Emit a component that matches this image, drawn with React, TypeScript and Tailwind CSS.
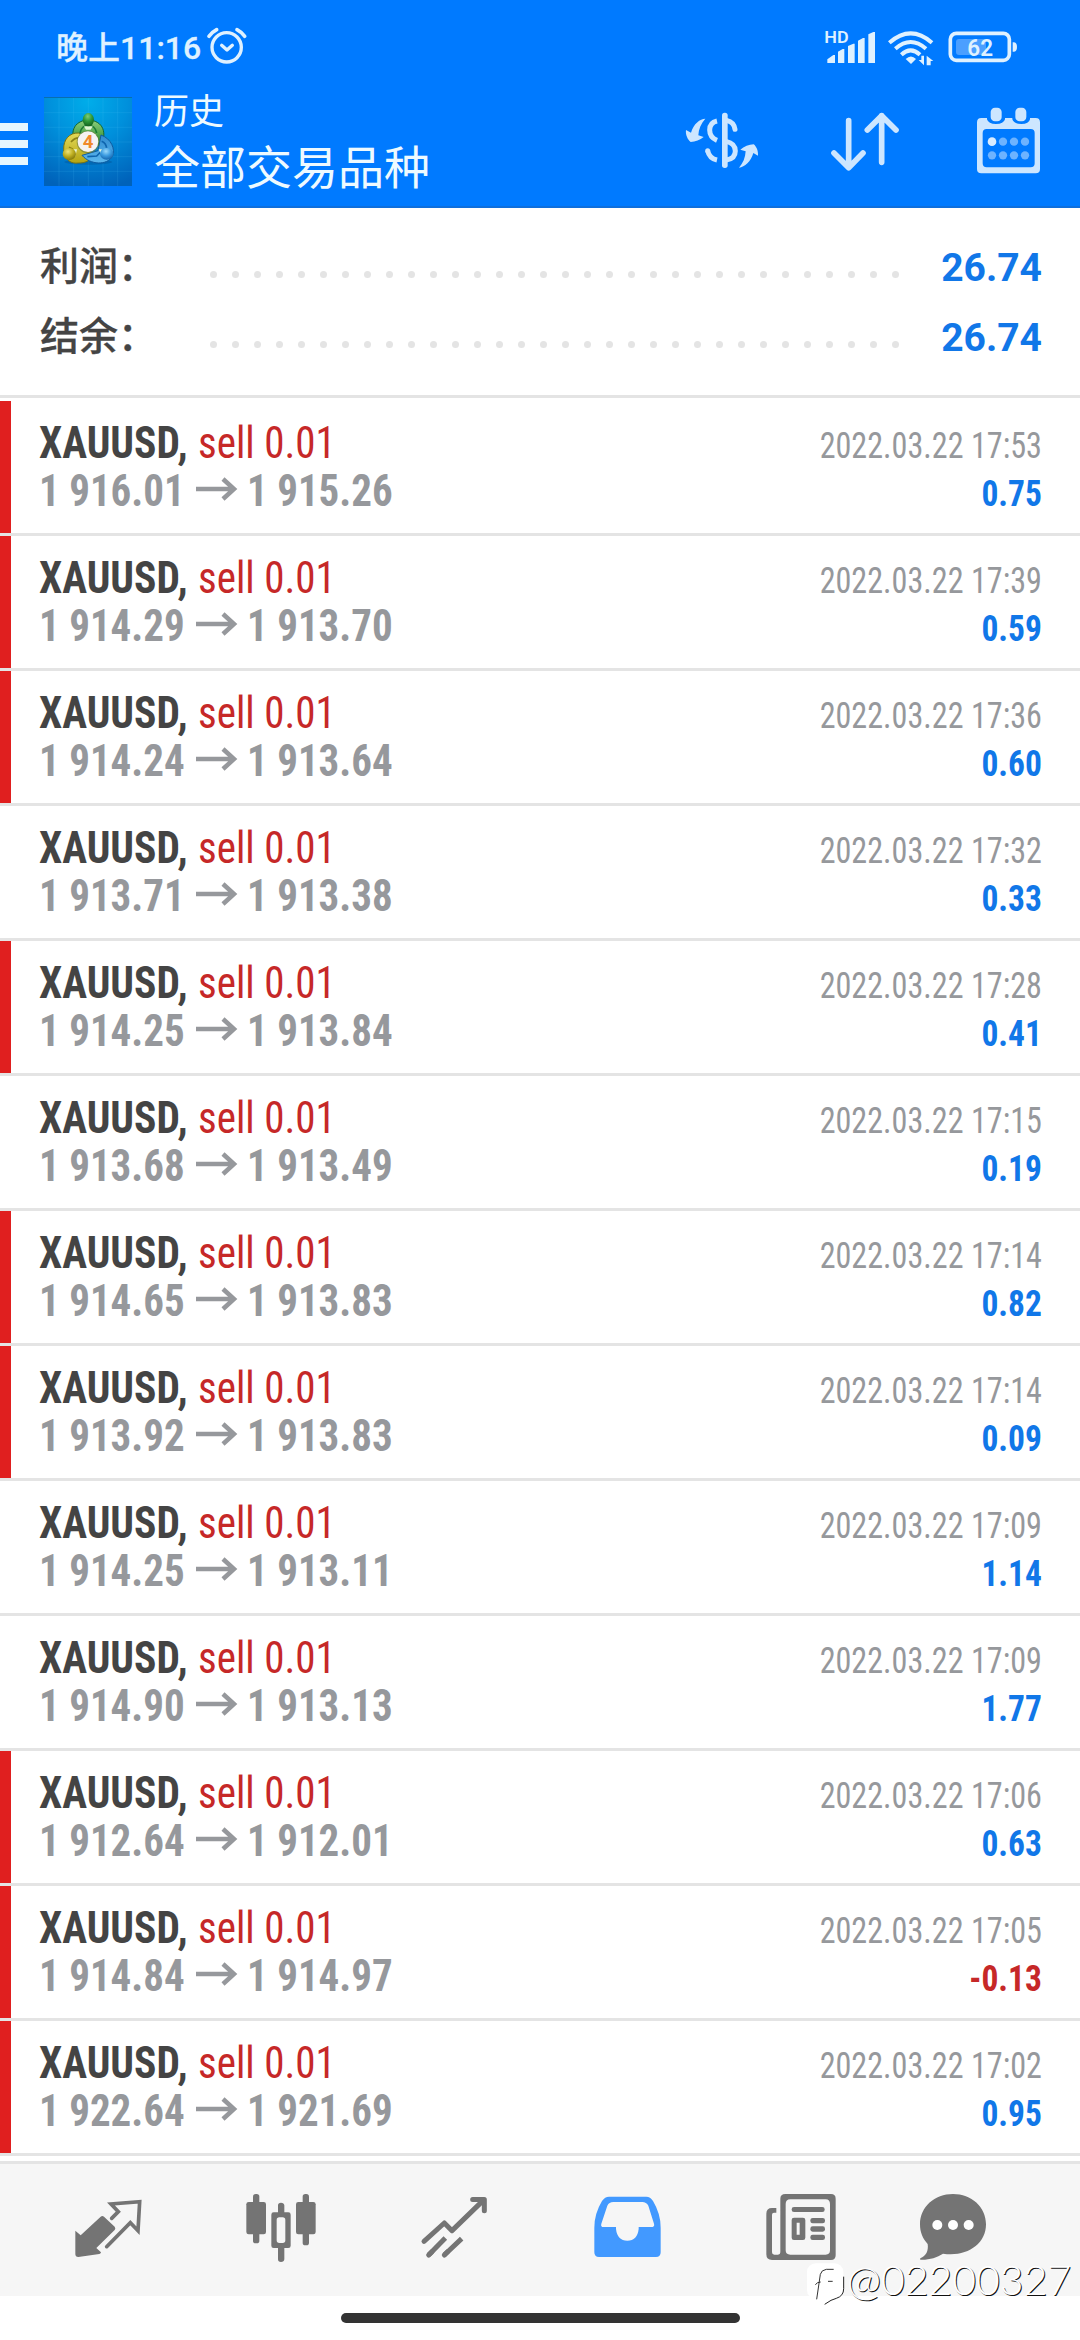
import React from "react";

type Trade = {
  open: string;
  close: string;
  time: string;
  profit: string;
  marked: boolean;
};

const trades: Trade[] = [
  { open: "1 916.01", close: "1 915.26", time: "17:53", profit: "0.75", marked: true },
  { open: "1 914.29", close: "1 913.70", time: "17:39", profit: "0.59", marked: true },
  { open: "1 914.24", close: "1 913.64", time: "17:36", profit: "0.60", marked: true },
  { open: "1 913.71", close: "1 913.38", time: "17:32", profit: "0.33", marked: false },
  { open: "1 914.25", close: "1 913.84", time: "17:28", profit: "0.41", marked: true },
  { open: "1 913.68", close: "1 913.49", time: "17:15", profit: "0.19", marked: false },
  { open: "1 914.65", close: "1 913.83", time: "17:14", profit: "0.82", marked: true },
  { open: "1 913.92", close: "1 913.83", time: "17:14", profit: "0.09", marked: true },
  { open: "1 914.25", close: "1 913.11", time: "17:09", profit: "1.14", marked: false },
  { open: "1 914.90", close: "1 913.13", time: "17:09", profit: "1.77", marked: false },
  { open: "1 912.64", close: "1 912.01", time: "17:06", profit: "0.63", marked: true },
  { open: "1 914.84", close: "1 914.97", time: "17:05", profit: "-0.13", marked: true },
  { open: "1 922.64", close: "1 921.69", time: "17:02", profit: "0.95", marked: true },
];

function AlarmIcon() {
  return (
    <svg className="h-[42px] w-[42px]" viewBox="620 78 126 126" fill="none" stroke="#dff1ff" strokeLinecap="round" strokeLinejoin="round">
      <circle cx="682" cy="145" r="44" strokeWidth="10" />
      <path d="M667 139l16 14 16-14" strokeWidth="10" />
      <path d="M629 112q8-12 23-20M736 112q-8-12-23-20" strokeWidth="11" />
    </svg>
  );
}

function StatusIcons() {
  return (
    <svg className="h-[50px] w-[200px]" viewBox="540 75 600 150" fill="#dff1ff">
      <text x="553" y="129" fontSize="48" fontWeight="600" fontFamily="Roboto, sans-serif" textLength="73" lengthAdjust="spacingAndGlyphs">HD</text>
      <path d="M562 178l18-13h5v24h-23zM594 155l14-8h5v42h-19zM624 138l16-7h4v58h-20zM654 122l15-8h5v75h-20zM685 103l15-7h5v93h-20z" />
      <g fill="none" stroke="#dff1ff" strokeWidth="12">
        <path d="M748 128q64-56 128 0" />
        <path d="M766 146q46-40 92 0" />
        <path d="M784 164q28-26 56 0" />
      </g>
      <path d="M797 177q16-15 31 0l-15 15z" />
      <path d="M836 180h8v-13h8v29zM860 196v-29l20 16h-8v13z" />
      <rect x="931" y="100" width="177" height="81" rx="18" fill="none" stroke="#dff1ff" strokeWidth="11" />
      <rect x="948" y="117" width="90" height="48" rx="9" fill="#4b9fff" />
      <path d="M1118 127q13-2 13 14t-13 14z" />
      <text x="982" y="167" fontSize="69" fontWeight="600" fontFamily="Roboto, sans-serif" textLength="77" lengthAdjust="spacingAndGlyphs">62</text>
    </svg>
  );
}

function AppLogo() {
  return (
    <svg className="ml-4 h-[89px] w-[88px]" viewBox="132 291 264 267">
      <defs>
        <radialGradient id="logoBg" cx="0.5" cy="0.05" r="1">
          <stop offset="0" stopColor="#00adea" />
          <stop offset="0.45" stopColor="#0090dc" />
          <stop offset="1" stopColor="#0062ba" />
        </radialGradient>
        <linearGradient id="logoGreen" x1="0" y1="0" x2="0" y2="1">
          <stop offset="0" stopColor="#8fd07c" />
          <stop offset="1" stopColor="#1f8429" />
        </linearGradient>
        <linearGradient id="logoYellow" x1="0" y1="0" x2="0" y2="1">
          <stop offset="0" stopColor="#e4da58" />
          <stop offset="1" stopColor="#b4a412" />
        </linearGradient>
        <linearGradient id="logoBlue" x1="0" y1="0" x2="0" y2="1">
          <stop offset="0" stopColor="#2f8ad0" />
          <stop offset="1" stopColor="#5cb8ee" />
        </linearGradient>
        <radialGradient id="ballGreen" cx="0.45" cy="0.25" r="0.75">
          <stop offset="0" stopColor="#7fcc78" />
          <stop offset="0.5" stopColor="#2f9a3a" />
          <stop offset="1" stopColor="#12611e" />
        </radialGradient>
        <radialGradient id="ballYellow" cx="0.4" cy="0.3" r="0.75">
          <stop offset="0" stopColor="#ece27a" />
          <stop offset="0.5" stopColor="#c0b022" />
          <stop offset="1" stopColor="#7d7208" />
        </radialGradient>
        <radialGradient id="ballBlue" cx="0.45" cy="0.3" r="0.75">
          <stop offset="0" stopColor="#9ad9fb" />
          <stop offset="0.5" stopColor="#3b9be0" />
          <stop offset="1" stopColor="#125fa6" />
        </radialGradient>
      </defs>
      <rect x="132" y="291" width="264" height="267" fill="url(#logoBg)" />
      <path d="M177 291v267M221 291v267M265 291v267M309 291v267M353 291v267M132 338h264M132 382h264M132 426h264M132 470h264M132 514h264" stroke="#5fd0ff" strokeOpacity="0.2" strokeWidth="2" />
      <path d="M132 292h264" stroke="#086fae" strokeWidth="4" />
      <ellipse cx="265" cy="486" rx="72" ry="8" fill="#004a8c" opacity="0.35" />
      <path d="M226 436c-16-38-8-72 39-77 47 5 55 40 39 77z" fill="url(#logoGreen)" stroke="#14662a" strokeWidth="3" />
      <path d="M240 399c6-31 44-31 50 0" fill="none" stroke="#1c7a34" strokeWidth="5" />
      <path d="M238 399c-30-2-48 20-47 49 2 34 24 44 44 41 20 1 36-8 46-20z" fill="url(#logoYellow)" stroke="#7b7410" strokeWidth="3" />
      <path d="M213 426q12-14 27-12M207 442l12 6" fill="none" stroke="#8c8216" strokeWidth="5" />
      <path d="M303 405c31 11 44 43 34 64-16 28-66 26-91-3l48-14z" fill="url(#logoBlue)" stroke="#0f5ba0" strokeWidth="3" />
      <path d="M305 424q14 6 15 22M262 470l28-2 12-12" fill="none" stroke="#0f65ae" strokeWidth="5" />
      <path d="M221 448h10l-5 22zM296 448h11l-4 15z" fill="#e9f6d8" />
      <path d="M252 379h26l-6 10h-14z" fill="#dff5d4" />
      <ellipse cx="265" cy="359" rx="17" ry="20" fill="url(#ballGreen)" />
      <ellipse cx="208" cy="462" rx="20" ry="18" fill="url(#ballYellow)" />
      <ellipse cx="320" cy="461" rx="20" ry="18" fill="url(#ballBlue)" />
      <circle cx="264" cy="426" r="34" fill="#6b7a3a" opacity="0.6" />
      <circle cx="264" cy="425" r="31" fill="#f5f3f3" />
      <text x="264" y="444" textAnchor="middle" fontSize="56" fontWeight="700" fontFamily="Roboto, sans-serif" fill="#f08a2c">4</text>
    </svg>
  );
}

function CurrencyIcon() {
  return (
    <svg className="h-[75px] w-[85px]" viewBox="120 315 255 225" fill="#cde6ff">
      <path d="M196 356c-16 0-35 15-43 42l-15-8c-2 14 5 29 14 36 14-1 28-6 39-15l-16-5c1-19 8-36 21-50z" />
      <path d="M297 503c17-2 36-18 43-44l14 8c1-15-5-28-13-34-14 1-29 6-40 16l16 5c-1 19-8 36-20 49z" />
      <rect x="246" y="338" width="17" height="166" rx="8" />
      <g fill="none" stroke="#cde6ff" strokeWidth="15">
        <path d="M231 363q-22 5-22 27t22 31" />
        <path d="M203 452q5 23 28 28" strokeLinecap="butt" />
        <path d="M260 361q22 5 25 27" strokeLinecap="round" />
        <path d="M258 424q28 6 28 29t-27 27" />
      </g>
      <circle cx="203" cy="452" r="7.500" />
    </svg>
  );
}

function SortIcon() {
  return (
    <svg className="ml-[60px] h-[75px] w-[80px]" viewBox="555 315 240 225" fill="none" stroke="#cde6ff" strokeWidth="17" strokeLinecap="round" strokeLinejoin="round">
      <path d="M626 362v140M582 459l44 44 43-44" />
      <path d="M725 487V347M682 390l43-43 43 43" />
    </svg>
  );
}

function CalendarIcon() {
  return (
    <svg className="ml-[65px] h-[75px] w-[80px]" viewBox="990 315 240 225">
      <path fillRule="evenodd" fill="#cde6ff" d="M1024 354h17v4q4 14 27 14t27-14v-4h22v4q4 14 27 14t26-14v-4h17q13 0 13 13v140q0 13-13 13h-163q-13 0-13-13V367q0-13 13-13zM1040 387q-12 0-12 12v91q0 12 12 12h132q12 0 12-12v-91q0-12-12-12z" />
      <rect x="1052" y="323" width="33" height="41" rx="13" fill="#cde6ff" />
      <rect x="1126" y="323" width="33" height="41" rx="13" fill="#cde6ff" />
      <g fill="#6db3ff">
        <circle cx="1056" cy="425" r="13" fill="#d9ecff" />
        <circle cx="1089" cy="425" r="12.5" />
        <circle cx="1122" cy="425" r="12.5" />
        <circle cx="1155" cy="425" r="12.5" />
        <circle cx="1056" cy="466" r="12.5" />
        <circle cx="1089" cy="466" r="12.5" />
        <circle cx="1122" cy="466" r="12.5" />
        <circle cx="1155" cy="466" r="12.5" />
      </g>
    </svg>
  );
}

function SummaryLine({ label, value }: { label: string; value: string }) {
  return (
    <div className="flex h-[70px] items-center">
      <span className="w-[170px] font-['Roboto','Noto_Sans_CJK_SC',sans-serif] text-[39px] leading-[70px] font-medium text-[#444444] [-webkit-text-stroke:0.3px_#444444]">{label}</span>
      <div className="mt-[15px] flex w-[689px] justify-between">
        {Array.from({ length: 32 }, (_, i) => (
          <span key={i} className="size-[7px] rounded-full bg-[#e4e4e4]" />
        ))}
      </div>
      <span className="mt-[2px] ml-auto text-[39px] leading-[70px] font-bold text-[#1177e8]">{value}</span>
    </div>
  );
}

function TradeRow({ trade }: { trade: Trade }) {
  return (
    <div className="flex h-[135px] border-b-[3px] border-[#e4e4e4] [font-stretch:75%] font-['Roboto_Condensed','Roboto',sans-serif]">
      <div className={trade.marked ? "w-[11px] bg-[#e01f1f]" : "w-[11px]"} />
      <div className="ml-[28px] pt-[18px] text-[44px] leading-[48px] whitespace-nowrap">
        <div className="flex">
          <span className="w-[159px] origin-left scale-x-[0.943] font-bold text-[#444444]">XAUUSD,</span>
          <span className="origin-left scale-x-[0.932] text-[#c62828]">sell 0.01</span>
        </div>
        <div className="flex font-bold text-[#96989c]">
          <span className="w-[155px] origin-left scale-x-[0.932]">{trade.open}</span>
          <svg className="mt-[10px] h-6 w-[44px]" viewBox="0 0 44 24" fill="none" stroke="#96989c" strokeWidth="4.5">
            <path d="M2 12h38M29 2l11 10-11 10" />
          </svg>
          <span className="ml-[9px] origin-left scale-x-[0.932]">{trade.close}</span>
        </div>
      </div>
      <div className="mr-[38px] ml-auto pt-[21px] text-right text-[36px] leading-[48px] whitespace-nowrap">
        <div className="origin-right scale-x-[0.893] text-[#96989c]">2022.03.22 {trade.time}</div>
        <div className={trade.profit.startsWith("-") ? "origin-right scale-x-[0.93] font-bold text-[#c62828]" : "origin-right scale-x-[0.93] font-bold text-[#1177e8]"}>{trade.profit}</div>
      </div>
    </div>
  );
}

function BottomNav() {
  return (
    <nav className="flex h-[135px] border-t-[3px] border-[#e4e4e4] bg-[#f6f6f6] pt-[26px] pl-[68px]">
      <svg className="size-[80px]" viewBox="204 210 240 240">
        <path d="M226 332l16 14 60-56q5-4 10 0l32 30q4 5 0 10l-55 54 14 13q0 4-5 5l-63 9q-9 0-9-9z" fill="#747474" />
        <path d="M335 295l20-20-22-23 86-7-5 87-23-24-71 72" fill="none" stroke="#747474" strokeWidth="11" strokeLinecap="round" />
      </svg>
      <svg className="ml-[93px] size-[80px]" viewBox="723 210 240 240" fill="#747474">
        <rect x="759" y="222" width="19" height="148" rx="8" />
        <rect x="739" y="246" width="59" height="97" rx="7" />
        <rect x="908" y="222" width="19" height="154" rx="8" />
        <rect x="888" y="246" width="59" height="97" rx="7" />
        <path d="M834 280v-24q0-8 9-8t10 8v24zM834 380v38q0 8 9 8t10-8v-38z" />
        <path fillRule="evenodd" d="M821 277h44q7 0 7 7v93q0 7-7 7h-44q-7 0-7-7v-93q0-7 7-7zM838 292q-8 0-8 8v61q0 8 8 8h10q8 0 8-8v-61q0-8-8-8z" />
      </svg>
      <svg className="ml-[93px] size-[80px]" viewBox="162 210 240 240" fill="none" stroke="#747474" strokeWidth="15" strokeLinecap="round" strokeLinejoin="round">
        <path d="M192 364l61-55 23 23 93-90" />
        <path d="M338 238.500h35V272" />
        <path d="M206 405l50-51M253 405l52-49" strokeLinecap="butt" />
        <path d="M206 405l10-10M253 405l10-10" />
      </svg>
      <svg className="ml-[94px] size-[80px]" viewBox="684 210 240 240">
        <path fillRule="evenodd" fill="#4299ff" d="M747 230h112q12 0 20 13 23 38 23 80v74q0 14-14 14H717q-14 0-14-14v-74q0-42 23-80 9-13 21-13zM760 246q-13 0-18 11l-18 54q-3 10 7 10h37v6q4 35 34 35t34-35v-6h37q12 0 9-10l-17-54q-6-11-18-11z" />
      </svg>
      <svg className="ml-[93px] size-[80px]" viewBox="123 210 240 240" fill="#747474">
        <path fillRule="evenodd" d="M196 222h137q14 0 14 14v170q0 14-14 14H156q-17 0-17-17V281q0-17 17-17h13v14h-7q-6 0-6 6v113q0 7 7 7h11q7 0 7-7V236q0-14 15-14zM211 238q-14 0-14 14v139q0 13 14 13h106q13 0 13-13V252q0-14-13-14z" />
        <rect x="215" y="261" width="99" height="15" rx="7" />
        <path fillRule="evenodd" d="M222 293h27q7 0 7 7v53q0 7-7 7h-27q-7 0-7-7v-53q0-7 7-7zM230 308v36h9v-36z" />
        <rect x="271" y="294" width="44" height="16" rx="7" />
        <rect x="271" y="319" width="44" height="16" rx="7" />
        <rect x="271" y="344" width="44" height="16" rx="7" />
      </svg>
      <svg className="ml-[72px] size-[80px]" viewBox="579 210 240 240" fill="#747474">
        <path d="M699 222c55 0 99 38 99 91 0 61-60 99-129 88-19 12-41 19-68 18-1-1-1-3 0-4 17-7 25-22 22-43-15-16-23-35-23-59 0-53 44-91 99-91z" />
        <g fill="#ffffff">
          <circle cx="652" cy="315" r="15" />
          <circle cx="699" cy="315" r="15" />
          <circle cx="746" cy="315" r="15" />
        </g>
      </svg>
    </nav>
  );
}

function Watermark() {
  return (
    <div className="absolute top-[2255px] left-[806px] flex">
      <svg className="mt-[6px] h-[44px] w-[41px]" viewBox="258 423 123 132">
        <rect x="261" y="430" width="109" height="107" rx="26" fill="#ffffff" />
        <path d="M371 470v36q0 22-22 29l-16 6-19 12" fill="none" stroke="#222222" strokeWidth="3" />
        <path d="M290 538l11-75q3-13 18-15h22M286 494q6-8 16-8M324 484h14" fill="none" stroke="#333333" strokeWidth="3" />
      </svg>
      <span className="font-['Lato',sans-serif] text-[41px] leading-[50px] font-light text-white [text-shadow:1px_1px_0_#111111]">@02200327</span>
    </div>
  );
}

export default function App() {
  return (
    <div className="relative flex h-[2340px] w-[1080px] flex-col overflow-hidden bg-white font-['Roboto','Noto_Sans_CJK_SC',sans-serif]">
      <header className="h-[208px] border-b-2 border-[#0f6fdc] bg-[#007aff] text-[#eefaff]">
        <div className="flex h-[90px] items-start pt-[25px] pl-[56px]">
          <span className="mt-px w-[150px] text-[32px] leading-[44px] font-medium whitespace-nowrap text-[#dff1ff] [-webkit-text-stroke:0.3px_#dff1ff]">晚上11:16</span>
          <AlarmIcon />
          <div className="mr-[60px] ml-auto">
            <StatusIcons />
          </div>
        </div>
        <div className="flex h-[116px] items-start">
          <div className="mt-[33px] flex w-[28px] flex-col gap-[9px]">
            <span className="h-2 bg-[#e6f6ff]" />
            <span className="h-2 bg-[#e6f6ff]" />
            <span className="h-2 bg-[#e6f6ff]" />
          </div>
          <div className="mt-[7px]">
            <AppLogo />
          </div>
          <div className="-mt-[3px] ml-[22px] flex flex-col font-['Noto_Sans_CJK_SC',sans-serif] whitespace-nowrap">
            <span className="text-[35px] leading-[44px]">历史</span>
            <span className="text-[46px] leading-[66px]">全部交易品种</span>
          </div>
          <div className="mt-[15px] mr-[30px] ml-auto flex">
            <CurrencyIcon />
            <SortIcon />
            <CalendarIcon />
          </div>
        </div>
      </header>

      <section className="h-[190px] border-b-[3px] border-[#e4e4e4] pt-[24px] pr-[38px] pl-[40px]">
        <SummaryLine label="利润：" value="26.74" />
        <SummaryLine label="结余：" value="26.74" />
      </section>

      <main className="mt-[3px] h-[1760px]">
        {trades.map((trade, i) => (
          <TradeRow key={i} trade={trade} />
        ))}
      </main>

      <BottomNav />
      <div className="mx-auto mt-[17px] h-[10px] w-[399px] rounded-full bg-[#333333]" />
      <Watermark />
    </div>
  );
}
